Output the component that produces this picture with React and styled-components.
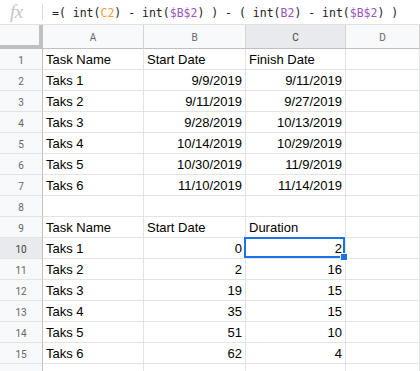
import React from "react";
import styled, { createGlobalStyle } from "styled-components";

const GlobalStyle = createGlobalStyle`
  html, body {
    margin: 0;
    padding: 0;
    background: #ffffff;
    overflow: hidden;
  }
`;

const columns = ["A", "B", "C", "D"];

const rows = [
  ["Task Name", "Start Date", "Finish Date"],
  ["Taks 1", "9/9/2019", "9/11/2019"],
  ["Taks 2", "9/11/2019", "9/27/2019"],
  ["Taks 3", "9/28/2019", "10/13/2019"],
  ["Taks 4", "10/14/2019", "10/29/2019"],
  ["Taks 5", "10/30/2019", "11/9/2019"],
  ["Taks 6", "11/10/2019", "11/14/2019"],
  ["", "", ""],
  ["Task Name", "Start Date", "Duration"],
  ["Taks 1", 0, 2],
  ["Taks 2", 2, 16],
  ["Taks 3", 19, 15],
  ["Taks 4", 35, 15],
  ["Taks 5", 51, 10],
  ["Taks 6", 62, 4],
];

// selected cell: C10
const selected = { row: 10, col: 2 };

const isRightAligned = (value, rowIndex) =>
  typeof value === "number" || (rowIndex > 0 && /^\d+\/\d+\/\d+$/.test(value));

const App = () => {
  return (
    <Page>
      <GlobalStyle />
      <FormulaBar>
        <FxIcon>fx</FxIcon>
        <Divider />
        <FormulaText>
          =( int(<Ref color="#f29b33">C2</Ref>) - int(<Ref color="#9b55c0">$B$2</Ref>) ) - (
          int(<Ref color="#9b55c0">B2</Ref>) - int(<Ref color="#9b55c0">$B$2</Ref>) )
        </FormulaText>
      </FormulaBar>

      <Sheet>
        <Corner />
        {columns.map((col, i) => (
          <ColHeader key={col} $active={i === selected.col}>
            {col}
          </ColHeader>
        ))}

        {rows.map((row, r) => {
          const rowNumber = r + 1;
          return (
            <React.Fragment key={rowNumber}>
              <RowHeader $active={rowNumber === selected.row}>{rowNumber}</RowHeader>
              {row.map((value, c) => {
                const isSelected = rowNumber === selected.row && c === selected.col;
                return (
                  <Cell key={c} $right={isRightAligned(value, r)}>
                    {value}
                    {isSelected && (
                      <Selection>
                        <FillHandle />
                      </Selection>
                    )}
                  </Cell>
                );
              })}
              <Cell />
            </React.Fragment>
          );
        })}

        {/* next row, only its top edge shows under the fold */}
        <RowHeader />
        <Cell />
        <Cell />
        <Cell />
        <Cell />
      </Sheet>
    </Page>
  );
};

const Page = styled.div`
  width: 420px;
  height: 371px;
  overflow: hidden;
  background: #ffffff;
`;

const FormulaBar = styled.div`
  display: flex;
  align-items: center;
  height: 24px;
  border-bottom: 1px solid #e1e1e1;
`;

const FxIcon = styled.span`
  width: 42px;
  padding-left: 10px;
  box-sizing: border-box;
  font-family: "Liberation Serif", serif;
  font-style: italic;
  font-size: 19px;
  color: #c4c4c4;
  line-height: 24px;
  letter-spacing: -0.5px;
`;

const Divider = styled.span`
  width: 1px;
  height: 16px;
  background: #dadada;
  margin-right: 9px;
`;

const FormulaText = styled.span`
  font-family: "DejaVu Sans Mono", "Liberation Mono", monospace;
  font-size: 11.5px;
  color: #222222;
  white-space: pre;
  line-height: 24px;
  padding-top: 1px;
`;

const Ref = styled.span`
  color: ${props => props.color};
`;

const Sheet = styled.div`
  display: grid;
  grid-template-columns: 43px 101px 102px 100px 1fr;
  grid-template-rows: 24px;
  grid-auto-rows: 21px;
`;

const HeaderBase = styled.div`
  box-sizing: border-box;
  display: flex;
  align-items: center;
  justify-content: center;
  font-family: Roboto, "Liberation Sans", sans-serif;
  font-size: 10px;
  color: ${props => (props.$active ? "#3c4043" : "#666666")};
  background: ${props => (props.$active ? "#e8eaed" : "#f8f9fa")};
`;

const Corner = styled(HeaderBase)`
  border-right: 4px solid #c0c0c0;
  border-bottom: 4px solid #c0c0c0;
`;

const ColHeader = styled(HeaderBase)`
  border-right: 1px solid #d4d4d4;
  border-bottom: 1px solid #c0c0c0;
  padding-top: 1px;
`;

const RowHeader = styled(HeaderBase)`
  border-right: 1px solid #c0c0c0;
  border-bottom: 1px solid #e2e3e3;
  padding-top: 3px;
`;

const Cell = styled.div`
  position: relative;
  box-sizing: border-box;
  border-right: 1px solid #e2e3e3;
  border-bottom: 1px solid #e2e3e3;
  padding: 0 3px;
  font-family: "Liberation Sans", Arial, sans-serif;
  font-size: 13px;
  line-height: 21px;
  color: #000000;
  text-align: ${props => (props.$right ? "right" : "left")};
  white-space: nowrap;
`;

const Selection = styled.div`
  position: absolute;
  top: -1px;
  left: -2px;
  right: 0;
  bottom: 0;
  border: 2px solid #1a73e8;
  z-index: 2;
  pointer-events: none;
`;

const FillHandle = styled.div`
  position: absolute;
  right: -5px;
  bottom: -5px;
  width: 6px;
  height: 6px;
  background: #1a73e8;
  border: 1px solid #ffffff;
`;

export default App;
